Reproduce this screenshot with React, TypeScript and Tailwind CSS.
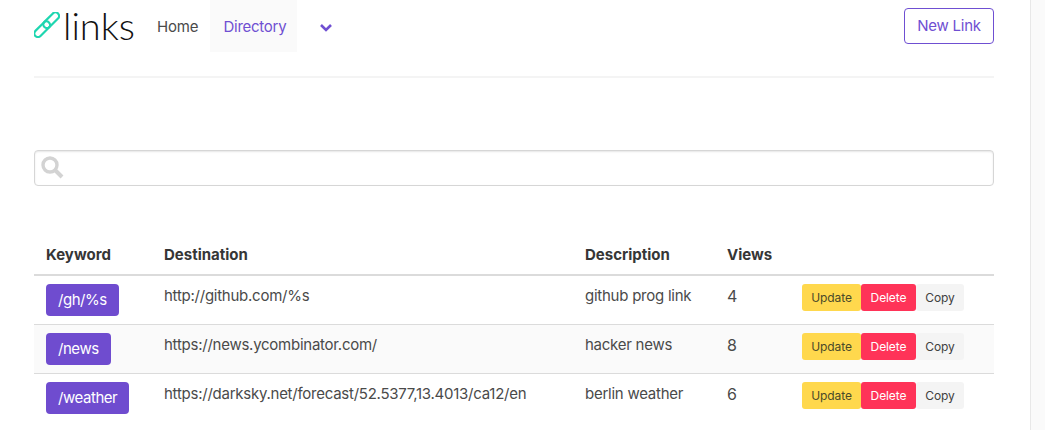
import React from "react";

const rows = [
  { k: "/gh/%s", d: "http://github.com/%s", desc: "github prog link", v: 4 },
  { k: "/news", d: "https://news.ycombinator.com/", desc: "hacker news", v: 8 },
  { k: "/weather", d: "https://darksky.net/forecast/52.5377,13.4013/ca12/en", desc: "berlin weather", v: 6 },
];

function Actions() {
  return (
    <div className="flex text-[12px] leading-[27px] tracking-[-0.1px]">
      <button className="w-[59px] h-[27px] bg-[#ffd84d] text-[#4a4a2a] rounded-[3px] text-center">Update</button>
      <button className="w-[55px] h-[27px] bg-[#ff3358] text-white rounded-[3px] text-center">Delete</button>
      <button className="w-[48px] h-[27px] bg-[#f4f4f4] text-[#404040] rounded-[3px] text-center">Copy</button>
    </div>
  );
}

export default function App() {
  return (
    <div className="relative h-[430px] overflow-hidden bg-white text-[#4a4a4a] font-['Inter',sans-serif] flex">
      <div className="w-[1030px] pl-[34px] pr-[36px]">
        <nav className="flex h-[52px] items-start">
          <div className="flex items-center w-[110px] h-[52px]">
            <svg width="26" height="26" viewBox="0 0 26 26" fill="none" stroke="#1fd6b0" strokeWidth="2.2" className="-mt-[2px] shrink-0">
              <rect x="-9.6" y="-3.6" width="19.2" height="7.2" rx="3.6" transform="translate(8.2 17.2) rotate(-45)" />
              <rect x="-9.6" y="-3.6" width="19.2" height="7.2" rx="3.6" transform="translate(17.2 8.2) rotate(-45)" />
            </svg>
            <span className="font-['Lato',sans-serif] font-light text-[#111] text-[38px] leading-none ml-[3px] -mt-[3px]">links</span>
          </div>
          <a className="ml-[13px] text-[15px] leading-[54px] tracking-[-0.15px] text-[#4a4a4a]">Home</a>
          <a className="ml-[12px] w-[87px] h-[52px] bg-[#fafafa] pl-[13px] text-[15px] leading-[54px] tracking-[-0.25px] text-[#6f4fd2]">Directory</a>
          <div className="ml-[22px] h-[52px] flex items-center">
            <svg width="14" height="10" viewBox="0 0 14 10" fill="none" stroke="#6f4fd2" strokeWidth="2.6" className="mt-[3px]">
              <path d="M2 2l5 5 5-5" />
            </svg>
          </div>
          <button className="ml-auto mt-[8px] w-[90px] h-[36px] border border-[#6f4fd2] rounded-[4px] text-[15px] tracking-[-0.25px] text-[#6f4fd2] bg-white">New Link</button>
        </nav>
        <div className="mt-[24px] h-[2px] bg-[#f4f4f4]" />
        <div className="mt-[72px] relative h-[36px] border border-[#d6d6d6] rounded-[4px] shadow-[inset_0_1px_2px_rgba(10,10,10,0.1)]">
          <svg width="24" height="24" viewBox="0 0 24 24" fill="none" stroke="#d3d3d3" className="absolute left-[5px] top-[4px]">
            <circle cx="10" cy="10" r="7" strokeWidth="3.4" />
            <path d="M15.5 15.5L22 22" strokeWidth="4" />
          </svg>
        </div>
        <table className="mt-[51px] w-[960px] table-fixed border-collapse text-[15px] tracking-[-0.25px]">
          <colgroup>
            <col className="w-[118px]" />
            <col className="w-[421px]" />
            <col className="w-[142px]" />
            <col className="w-[75px]" />
            <col className="w-[204px]" />
          </colgroup>
          <thead>
            <tr className="border-b-2 border-[#dbdbdb] h-[38px] text-left text-[#363636] tracking-normal">
              <th className="pl-[12px] font-bold">Keyword</th>
              <th className="pl-[12px] font-bold">Destination</th>
              <th className="pl-[12px] font-bold">Description</th>
              <th className="pl-[12px] font-bold">Views</th>
              <th />
            </tr>
          </thead>
          <tbody>
            {rows.map((r, i) => (
              <tr key={r.k} className={`h-[49px] border-b border-[#dbdbdb] align-top ${i === 1 ? "bg-[#fafafa]" : ""} ${i === 2 ? "border-b-0" : ""}`}>
                <td className="pl-[12px] pt-[8px]">
                  <span className="inline-block h-[32px] px-[12px] bg-[#6f4ccf] text-white text-[15px] tracking-[-0.45px] leading-[32px] rounded-[4px]">{r.k}</span>
                </td>
                <td className="pl-[12px] pt-[8px] leading-[24px]">{r.d}</td>
                <td className="pl-[12px] pt-[8px] leading-[24px]">{r.desc}</td>
                <td className="pl-[12px] pt-[8px] leading-[24px] text-[16px]">{r.v}</td>
                <td className="pl-[12px] pt-[8px]"><Actions /></td>
              </tr>
            ))}
          </tbody>
        </table>
      </div>
      <div className="w-[15px] h-[430px] bg-[#fafafa] border-l border-[#e8e8e8]" />
    </div>
  );
}
